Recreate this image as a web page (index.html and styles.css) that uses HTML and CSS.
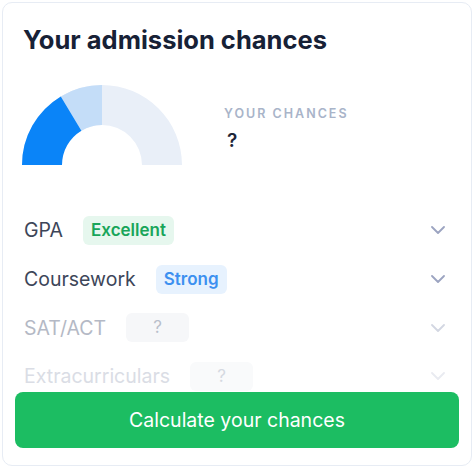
FILE: index.html
```html
<!DOCTYPE html>
<html lang="en">
<head>
  <meta charset="UTF-8">
  <title>Your admission chances</title>
  <link rel="stylesheet" href="styles.css">
</head>
<body>

  <div class="card">
    <h1>Your admission chances</h1>

    <div class="summary">
      <svg class="gauge" width="162" height="81" viewBox="0 0 162 81">
        <!-- pale track, light segment, strong segment -->
        <path d="M1 81 A80 80 0 0 1 161 81 L121 81 A40 40 0 0 0 41 81 Z" fill="#e9eff8"/>
        <path d="M81 1 L81 41 A40 40 0 0 0 60.4 46.7 L39.8 12.4 A80 80 0 0 1 81 1 Z" fill="#c4ddf8"/>
        <path d="M1 81 A80 80 0 0 1 39.8 12.4 L60.4 46.7 A40 40 0 0 0 41 81 Z" fill="#0a84f8"/>
      </svg>
      <div class="chances">
        <div class="label">Your chances</div>
        <div class="value">?</div>
      </div>
    </div>

    <ul class="factors">
      <li>
        <span class="name">GPA</span>
        <span class="badge green">Excellent</span>
        <svg class="chevron" width="14" height="8" viewBox="0 0 14 8"><path d="M1 1 L7 7 L13 1" fill="none" stroke="currentColor" stroke-width="1.8" stroke-linecap="round" stroke-linejoin="round"/></svg>
      </li>
      <li>
        <span class="name">Coursework</span>
        <span class="badge blue">Strong</span>
        <svg class="chevron" width="14" height="8" viewBox="0 0 14 8"><path d="M1 1 L7 7 L13 1" fill="none" stroke="currentColor" stroke-width="1.8" stroke-linecap="round" stroke-linejoin="round"/></svg>
      </li>
      <li class="faded">
        <span class="name">SAT/ACT</span>
        <span class="badge empty">?</span>
        <svg class="chevron" width="14" height="8" viewBox="0 0 14 8"><path d="M1 1 L7 7 L13 1" fill="none" stroke="currentColor" stroke-width="1.8" stroke-linecap="round" stroke-linejoin="round"/></svg>
      </li>
      <li class="faded more">
        <span class="name">Extracurriculars</span>
        <span class="badge empty">?</span>
        <svg class="chevron" width="14" height="8" viewBox="0 0 14 8"><path d="M1 1 L7 7 L13 1" fill="none" stroke="currentColor" stroke-width="1.8" stroke-linecap="round" stroke-linejoin="round"/></svg>
      </li>
    </ul>

    <button class="calc">Calculate your chances</button>
  </div>

</body>
</html>
```

FILE: styles.css
```css
* { box-sizing: border-box; margin: 0; padding: 0; }

body {
  font-family: 'Inter', 'Noto Sans', sans-serif;
  background: #fff;
  color: #172136;
}

.card {
  margin: 2px;
  width: 470px;
  height: 464px;
  border: 1px solid #e7ecf4;
  border-radius: 10px;
  padding: 20px 12px 0 12px;
  overflow: hidden;
}

h1 {
  font-size: 25.5px;
  font-weight: 700;
  color: #172136;
  padding-left: 8px;
  line-height: 34px;
}

.summary {
  display: flex;
  align-items: flex-start;
  padding-left: 6px;
  margin-top: 27px;
}

.gauge {
  display: block;
  flex-shrink: 0;
}

.chances {
  margin-left: 41px;
  padding-top: 22px;
}

.chances .label {
  font-size: 12.5px;
  font-weight: 600;
  letter-spacing: 2px;
  text-transform: uppercase;
  color: #a9b4c9;
}

.chances .value {
  font-size: 19px;
  font-weight: 600;
  margin-top: 8px;
  padding-left: 3px;
  color: #1e2638;
}

.factors {
  list-style: none;
  margin-top: 41px;
  padding: 0 9px;
}

.factors li {
  display: flex;
  align-items: center;
  height: 48.7px;
}

.factors .name {
  font-size: 19.5px;
  color: #3d4659;
  margin-right: 20px;
}

.badge {
  font-size: 17px;
  font-weight: 600;
  padding: 4px 8px;
  border-radius: 6px;
  line-height: 21px;
}

.badge.green {
  background: #e6f7ee;
  color: #18a55a;
}

.badge.blue {
  background: #e7f2fe;
  color: #3c90f0;
}

.badge.empty {
  background: #f6f7f9;
  color: #b9bfcb;
  font-weight: 400;
  width: 63px;
  text-align: center;
}

.chevron {
  margin-left: auto;
  margin-right: 5px;
  color: #9ca4c1;
}

.factors li.faded .name { color: #b4b9c5; }
.factors li.faded .chevron { color: #d3d7e2; }
.factors li.more .name { color: #dadde5; }
.factors li.more .badge { background: #f9fafb; color: #d5d9e1; }
.factors li.more .chevron { color: #e9ebf1; }

.calc {
  display: block;
  width: 100%;
  height: 56px;
  margin-top: -9px;
  position: relative;
  background: #1cbd62;
  color: #fff;
  border: none;
  border-radius: 8px;
  font-family: inherit;
  font-size: 19.5px;
  cursor: pointer;
}
```
